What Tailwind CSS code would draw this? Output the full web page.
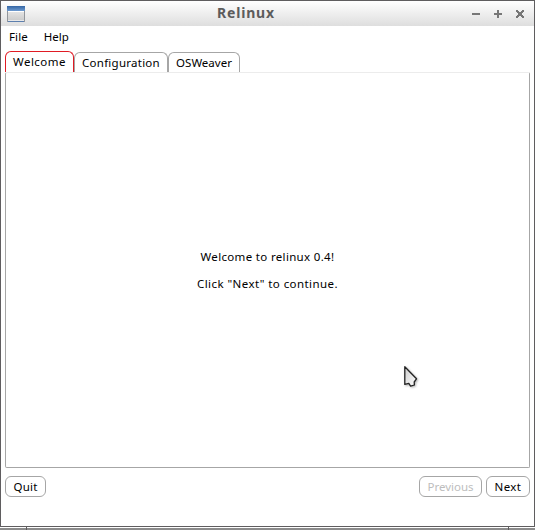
<!DOCTYPE html>
<html lang="en">
<head>
<meta charset="utf-8">
<title>Relinux</title>
<script src="https://cdn.jsdelivr.net/npm/@tailwindcss/browser@4"></script>
</head>
<body class="w-[535px] h-[530px] overflow-hidden bg-white text-black font-['Noto_Sans',sans-serif] text-[11.5px] leading-4">
<div class="relative flex flex-col w-[535px] h-[530px] border border-b-0 border-[#5f5d5f] bg-white whitespace-nowrap">
  <header class="grid grid-cols-[1fr_auto_1fr] items-center h-[25px] shrink-0 bg-linear-to-b from-white to-[#dedede] pl-1.5 pr-[9px]">
    <svg class="w-[18px] h-4" viewBox="0 0 18 16">
      <defs><linearGradient id="t" x2="0" y2="1"><stop stop-color="#3465a4"/><stop offset="1" stop-color="#6e9bd0"/></linearGradient>
      <linearGradient id="b" x2="0" y2="1"><stop stop-color="#f2f2f2"/><stop offset="1" stop-color="#c9c9c9"/></linearGradient></defs>
      <rect x=".5" y=".5" width="17" height="15" fill="url(#b)" stroke="#92969b"/>
      <rect x="0" y="0" width="18" height="5" fill="url(#t)"/><path d="M1 5.5h16" stroke="#fff"/><path d="M1 15.5h16" stroke="#5d7fae"/><path d="M1 14.5h16" stroke="#e8e8e8"/>
    </svg>
    <h1 class="text-[14px] leading-5 font-bold text-[#5c5c5c] tracking-[0.8px] translate-x-[-20px] -translate-y-px">Relinux</h1>
    <svg class="justify-self-end w-[53px] h-2.5" viewBox="0 0 53 10" fill="#777">
      <path d="M0 4h8v2H0zM22 4h3V1h2v3h3v2h-3v3h-2V6h-3z"/>
      <path d="M44 1h2v1h1v1h2V2h1V1h2v2h-1v1h-1v2h1v1h1v2h-2V8h-1V7h-2v1h-1v1h-2V7h1V6h1V4h-1V3h-1z"/>
    </svg>
  </header>
  <nav class="flex h-[22px] shrink-0 pl-2 pt-[3px] gap-4"><span class="tracking-[0.1px]">File</span><span>Help</span></nav>
  <div class="flex items-end h-6 shrink-0 pl-1 leading-[15px]">
    <div class="w-[69px] h-[21px] rounded-t-[6px] border border-b-0 border-[#e01b24] pt-[2px] text-center tracking-[0.45px]">Welcome</div>
    <div class="w-[94px] h-5 rounded-t-[6px] border border-b-0 border-[#a6a6a6] pt-[2px] text-center tracking-[0.25px]">Configuration</div>
    <div class="w-[72px] h-5 rounded-t-[6px] border border-b-0 border-[#a6a6a6] pt-[2px] text-center">OSWeaver</div>
  </div>
  <main class="mx-1 h-[396px] shrink-0 rounded-[2px] border border-[#a6a6a6] border-t-[#ececec] flex flex-col items-center pt-[176px] gap-[11px]">
    <p class="tracking-[0.33px]">Welcome to relinux 0.4!</p>
    <p class="tracking-[0.43px]">Click "Next" to continue.</p>
  </main>
  <footer class="flex h-[29px] shrink-0 px-1 pt-2 gap-1 leading-[19px]">
    <button class="w-[41px] h-[21px] rounded-[6px] border border-[#a6a6a6] mr-auto tracking-[0.2px]">Quit</button>
    <button class="w-[63px] h-[21px] rounded-[6px] border border-[#a6a6a6] text-[#bdbdbd]">Previous</button>
    <button class="w-[44px] h-[21px] rounded-[6px] border border-[#a6a6a6] tracking-[0.4px]">Next</button>
  </footer>
  <div class="mt-auto flex h-1 shrink-0 -mx-px border-t border-[#5f5d5f] bg-linear-to-b from-white from-34% to-[#8c8c8c] to-34%">
    <span class="w-[27px] border-r border-[#5f5d5f]"></span><span class="flex-1 border-r border-[#5f5d5f]"></span><span class="w-[26px]"></span>
  </div>
  <svg class="absolute left-[402px] top-[364px] w-4 h-6 drop-shadow-[1px_1px_1px_rgba(0,0,0,0.3)]" viewBox="0 0 16 24">
    <defs><linearGradient id="c" x2="1" y2="1"><stop stop-color="#ccc"/><stop offset="1" stop-color="#fff"/></linearGradient></defs>
    <path d="M1.8 1.8v17.6l4-1 1.8 2.8 3.8-1.2-.2-3 2.3-3.2z" fill="url(#c)" stroke="#222" stroke-width="1.3" stroke-linejoin="round"/>
  </svg>
</div>
</body>
</html>
